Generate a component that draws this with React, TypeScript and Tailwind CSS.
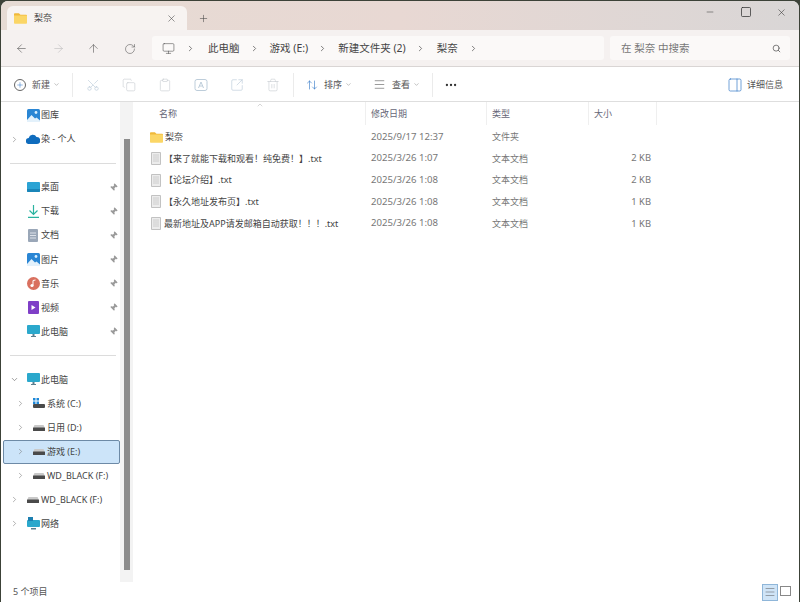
import { ArrowLeft, ArrowRight, ArrowUp, ArrowUpDown, ChevronDown, ChevronRight, ChevronUp, Clipboard, Copy, Ellipsis, Menu, Minus, Monitor, PanelRight, Pin, Plus, RotateCw, Scissors, Search, Square, SquareArrowOutUpRight, Trash2, X } from 'lucide-react';

const Folder = () => (
  <svg width="13" height="12" viewBox="0 0 16 14">
    <path d="M0 2a1 1 0 0 1 1-1h5l2 2h7a1 1 0 0 1 1 1v1H0z" fill="#f0b93a" />
    <path d="M0 4h16v9a1 1 0 0 1-1 1H1a1 1 0 0 1-1-1z" fill="#fbd666" />
  </svg>
);

const TextFile = () => (
  <svg width="10" height="13" viewBox="0 0 10 13">
    <path d="M.5.5h9v12h-9z" fill="#ececec" stroke="#c2c2c2" />
    <path d="M2 3h6M2 5h6M2 7h6M2 9h6" stroke="#c6c6c6" strokeWidth=".8" />
  </svg>
);

const Rename = () => (
  <svg width="14" height="14" viewBox="0 0 14 14" fill="none" stroke="#b5c7d6" strokeWidth=".9" className="ml-[22px]">
    <rect x="1" y="1.500" width="12" height="11" rx="2" />
    <path d="M4.500 10L7 4l2.500 6M5.400 8h3.200" />
  </svg>
);

const Picture = () => (
  <svg width="13" height="13" viewBox="0 0 13 13">
    <rect width="13" height="13" rx="1.5" fill="#2a86d4" />
    <circle cx="9" cy="3.5" r="1.4" fill="#d9efff" />
    <path d="M0 11l4.500-5 3.500 3.500 1.500-1L13 11.500V13H0z" fill="#e3f1fb" />
  </svg>
);

const Cloud = () => (
  <svg width="14" height="10" viewBox="0 0 14 10">
    <path d="M3 10a3 3 0 0 1-.3-6A4.200 4.200 0 0 1 10.500 3 3.500 3.500 0 0 1 11 10z" fill="#0f6cbd" />
  </svg>
);

const Desktop = () => (
  <svg width="13" height="10" viewBox="0 0 13 10">
    <rect width="13" height="10" rx="1" fill="#2ba3d4" />
    <path d="M0 7h13v2a1 1 0 0 1-1 1H1a1 1 0 0 1-1-1z" fill="#1a85b8" />
  </svg>
);

const Download = () => (
  <svg width="11" height="13" viewBox="0 0 11 13" fill="none" stroke="#2bb3a0" strokeWidth="1.200">
    <path d="M5.500 0v9M1.500 5.500l4 4 4-4M0 12.400h11" />
  </svg>
);

const Doc = () => (
  <svg width="10" height="13" viewBox="0 0 10 13">
    <rect width="10" height="13" rx="1" fill="#9aa7b8" />
    <path d="M2 4h6M2 6.500h6M2 9h6" stroke="#e4e9ef" strokeWidth=".9" />
  </svg>
);

const Music = () => (
  <svg width="13" height="13" viewBox="0 0 13 13">
    <circle cx="6.500" cy="6.500" r="6.500" fill="#d9705f" />
    <circle cx="5" cy="8.500" r="1.600" fill="#fff" />
    <path d="M6 8.500V3.500l2.500-.5" stroke="#fff" fill="none" />
  </svg>
);

const Video = () => (
  <svg width="11" height="13" viewBox="0 0 11 13">
    <rect width="11" height="13" rx="1" fill="#7f3fc7" />
    <path d="M3.500 4l4 2.500-4 2.500z" fill="#fff" />
  </svg>
);

const Pc = () => (
  <svg width="13" height="12" viewBox="0 0 13 12">
    <rect width="13" height="9" rx="1" fill="#2ba8cc" />
    <path d="M4 11h5v1H4zM5.500 9h2v2h-2z" fill="#5b7f8f" />
  </svg>
);

const Drive = () => (
  <svg width="12" height="6" viewBox="0 0 12 6">
    <path d="M1.500 0h9L12 3H0z" fill="#c9c9c9" />
    <rect y="2.500" width="12" height="3.500" rx=".6" fill="#4a4a4a" />
  </svg>
);

const SystemDrive = () => (
  <div className="relative w-[12px] h-[10px]">
    <svg width="6" height="6" viewBox="0 0 6 6" className="absolute left-0 top-0">
      <path d="M0 0h2.500v2.500H0zM3.500 0H6v2.500H3.500zM0 3.500h2.500V6H0zM3.500 3.500H6V6H3.500z" fill="#1e88d8" />
    </svg>
    <div className="absolute left-0 bottom-0 w-[12px] h-[4px] bg-[#4a4a4a] rounded-[1px]" />
  </div>
);

const Network = () => (
  <svg width="13" height="13" viewBox="0 0 13 13">
    <rect y="3" width="13" height="7" rx="1" fill="#2ba8cc" />
    <rect x="1" y="0" width="5" height="4" fill="#1d7fb0" />
    <path d="M4 11h5v1.500H4z" fill="#5b7f8f" />
  </svg>
);

function NavRow({ icon, label, level = 0, arrow, pin, selected }: { icon: React.ReactNode; label: string; level?: number; arrow?: 'right' | 'down'; pin?: boolean; selected?: boolean }) {
  const arrowCol = selected ? 'w-[28px] pl-[4px]' : level ? 'w-[30px] pl-[6px]' : 'w-[24px]';
  return (
    <div className={`flex items-center h-[24.050px] ${selected ? 'ml-[1px] bg-[#cce4f9] border border-[#6d8aa6] rounded-[2px]' : ''}`}>
      <div className={`flex justify-center shrink-0 ${arrowCol}`}>
        {arrow === 'right' && <ChevronRight size={9} strokeWidth={1.500} className="text-[#777]" />}
        {arrow === 'down' && <ChevronDown size={9} strokeWidth={1.500} className="text-[#555]" />}
      </div>
      <div className="flex justify-center items-center w-[14px] shrink-0">{icon}</div>
      <span className="ml-[1px] text-[9px] text-[#444] whitespace-nowrap">{label}</span>
      {pin && <Pin size={9} strokeWidth={0} fill="#9a9a9a" className="ml-auto mr-[2px] rotate-45" />}
    </div>
  );
}

function FileRow({ icon, name, date, type, size, folder }: { icon: React.ReactNode; name: string; date: string; type: string; size: string; folder?: boolean }) {
  return (
    <div className="grid grid-cols-[216px_121px_102px_68px] h-[21.700px] items-center text-[9px]">
      <div className="flex items-center">
        <div className={`flex items-center justify-center shrink-0 ${folder ? 'w-[13px]' : 'w-[11px]'}`}>{icon}</div>
        <span className={`${folder ? 'ml-[2px]' : 'ml-[3px]'} text-[#444] whitespace-nowrap`}>{name}</span>
      </div>
      <span className="pl-[5px] text-[#777] text-[9.600px]">{date}</span>
      <span className="pl-[5px] text-[#777]">{type}</span>
      <span className="pr-[6px] text-right text-[#777] text-[9.400px]">{size}</span>
    </div>
  );
}

export default function App() {
  return (
    <div className="w-[800px] h-[602px] bg-[#3c4238] overflow-hidden" style={{ fontFamily: '"Noto Sans", "Noto Sans CJK SC", sans-serif' }}>
      <div className="ml-[1px] mt-[1px] w-[798px] h-[601px] rounded-t-[7px] overflow-hidden flex flex-col bg-white">
        {/* title bar */}
        <div className="h-[29px] shrink-0 flex items-end pl-[6px] bg-gradient-to-r from-[#e6dbd4] via-[#e8d8d3] to-[#d9d6d6]">
          <div className="w-[180px] h-[24px] bg-[#f7f3f1] rounded-t-[6px] flex items-center pl-[7px] pr-[10px]">
            <Folder />
            <span className="ml-[7px] text-[9px] text-[#444]">梨奈</span>
            <X size={11} strokeWidth={1.200} className="ml-auto text-[#444]" />
          </div>
          <Plus size={11} strokeWidth={1.200} className="ml-[11px] mb-[6px] text-[#444]" />
          <div className="ml-auto self-start flex items-center mt-[5px] mr-[12px] text-[#333]">
            <Minus size={10} strokeWidth={1.200} className="mr-[24.500px]" />
            <Square size={12} strokeWidth={1.500} className="mr-[24.500px]" />
            <X size={11} strokeWidth={1.200} />
          </div>
        </div>
        {/* address row */}
        <div className="h-[37px] shrink-0 bg-[#f5f1f0] border-b border-[#d9d5d4] flex items-center">
          <div className="flex items-center w-[151px] mt-px text-[#555]">
            <ArrowLeft size={13} strokeWidth={1.100} className="ml-[14px]" />
            <ArrowRight size={13} strokeWidth={1.100} className="ml-[24px] text-[#bbb]" />
            <ArrowUp size={13} strokeWidth={1.100} className="ml-[22px]" />
            <RotateCw size={12} strokeWidth={1.100} className="ml-[24px]" />
          </div>
          <div className="w-[452px] h-[24px] pt-px bg-[#fbf9f8] rounded-[3px] flex items-center text-[10.500px] text-[#444]">
            <Monitor size={13} strokeWidth={1} className="ml-[10px] text-[#444]" />
            <ChevronRight size={9} className="ml-[11px] text-[#555]" />
            <span className="ml-[13px]">此电脑</span>
            <ChevronRight size={9} className="ml-[10px] text-[#555]" />
            <span className="ml-[11px]">游戏 (E:)</span>
            <ChevronRight size={9} className="ml-[10px] text-[#555]" />
            <span className="ml-[11px]">新建文件夹 (2)</span>
            <ChevronRight size={9} className="ml-[10px] text-[#555]" />
            <span className="ml-[12px]">梨奈</span>
            <ChevronRight size={9} className="ml-[11px] text-[#555]" />
          </div>
          <div className="ml-[6px] w-[180px] h-[24px] pt-px bg-[#fbf9f8] rounded-[3px] flex items-center pl-[11px] pr-[9px] text-[10.500px] text-[#777]">
            <span>在 梨奈 中搜索</span>
            <Search size={9} className="ml-auto text-[#555]" />
          </div>
        </div>
        {/* command bar */}
        <div className="h-[35px] shrink-0 pt-px bg-white border-b border-[#dedede] flex items-center text-[9px] text-[#555]">
          <div className="ml-[13px] w-[12px] h-[12px] rounded-full border border-[#666] flex items-center justify-center">
            <Plus size={8} strokeWidth={1.500} className="text-[#2a72c4]" />
          </div>
          <span className="ml-[6px]">新建</span>
          <ChevronDown size={7} className="ml-[3px] text-[#999]" />
          <div className="ml-[12px] w-px h-[24px] bg-[#ebebeb]" />
          <Scissors size={14} strokeWidth={1} className="ml-[13px] text-[#b5c7d6] -rotate-90" />
          <Copy size={14} strokeWidth={1} className="ml-[22px] text-[#c4c9ce]" />
          <Clipboard size={14} strokeWidth={1} className="ml-[22px] text-[#c4c9ce]" />
          <Rename />
          <SquareArrowOutUpRight size={14} strokeWidth={1} className="ml-[22px] text-[#b5c7d6]" />
          <Trash2 size={14} strokeWidth={1} className="ml-[22px] text-[#c4c9ce]" />
          <div className="ml-[13px] w-px h-[24px] bg-[#ebebeb]" />
          <ArrowUpDown size={12} strokeWidth={1.200} className="ml-[12px] text-[#2a72c4]" />
          <span className="ml-[6px]">排序</span>
          <ChevronDown size={7} className="ml-[3px] text-[#999]" />
          <Menu size={13} strokeWidth={1} className="ml-[21px] text-[#444]" />
          <span className="ml-[6px]">查看</span>
          <ChevronDown size={7} className="ml-[3px] text-[#999]" />
          <div className="ml-[12px] w-px h-[24px] bg-[#ebebeb]" />
          <Ellipsis size={14} strokeWidth={2} className="ml-[11px] text-[#333]" />
          <PanelRight size={16} strokeWidth={1} className="ml-auto text-[#2a72c4]" />
          <span className="ml-[4px] mr-[16px]">详细信息</span>
        </div>
        {/* body */}
        <div className="flex-1 min-h-0 flex">
          <div className="w-[119px] shrink-0 pl-[1px] pt-px">
            <NavRow icon={<Picture />} label="图库" />
            <NavRow icon={<Cloud />} label="染 - 个人" arrow="right" />
            <div className="h-[24px] flex items-center pl-[8px]"><div className="w-[106px] h-px bg-[#dcdcdc]" /></div>
            <NavRow icon={<Desktop />} label="桌面" pin />
            <NavRow icon={<Download />} label="下载" pin />
            <NavRow icon={<Doc />} label="文档" pin />
            <NavRow icon={<Picture />} label="图片" pin />
            <NavRow icon={<Music />} label="音乐" pin />
            <NavRow icon={<Video />} label="视频" pin />
            <NavRow icon={<Pc />} label="此电脑" pin />
            <div className="h-[24px] flex items-center pl-[8px]"><div className="w-[106px] h-px bg-[#dcdcdc]" /></div>
            <NavRow icon={<Pc />} label="此电脑" arrow="down" />
            <NavRow icon={<SystemDrive />} label="系统 (C:)" arrow="right" level={1} />
            <NavRow icon={<Drive />} label="日用 (D:)" arrow="right" level={1} />
            <NavRow icon={<Drive />} label="游戏 (E:)" arrow="right" level={1} selected />
            <NavRow icon={<Drive />} label="WD_BLACK (F:)" arrow="right" level={1} />
            <NavRow icon={<Drive />} label="WD_BLACK (F:)" arrow="right" />
            <NavRow icon={<Network />} label="网络" arrow="right" />
          </div>
          {/* nav scrollbar */}
          <div className="w-[13px] shrink-0 bg-[#f3f3f3] flex justify-center pt-[37px] pb-[12px]">
            <div className="w-[6px] h-full bg-[#8c8c8c]" />
          </div>
          {/* file list */}
          <div className="flex-1 pl-[17px]">
            <div className="relative grid grid-cols-[216px_121px_102px_68px] h-[24px] pb-px text-[9px] text-[#667]">
              <ChevronUp size={8} strokeWidth={1.200} className="absolute left-[106px] -top-[1px] text-[#999]" />
              <div className="flex items-center pl-[9px] border-r border-[#efefef]">名称</div>
              <div className="flex items-center pl-[5px] border-r border-[#efefef]">修改日期</div>
              <div className="flex items-center pl-[5px] border-r border-[#efefef]">类型</div>
              <div className="flex items-center pl-[5px] border-r border-[#efefef]">大小</div>
            </div>
            <FileRow icon={<Folder />} name="梨奈" date="2025/9/17 12:37" type="文件夹" size="" folder />
            <FileRow icon={<TextFile />} name="【来了就能下载和观看！纯免费！】.txt" date="2025/3/26 1:07" type="文本文档" size="2 KB" />
            <FileRow icon={<TextFile />} name="【论坛介绍】.txt" date="2025/3/26 1:08" type="文本文档" size="2 KB" />
            <FileRow icon={<TextFile />} name="【永久地址发布页】.txt" date="2025/3/26 1:08" type="文本文档" size="1 KB" />
            <FileRow icon={<TextFile />} name="最新地址及APP请发邮箱自动获取！！！.txt" date="2025/3/26 1:08" type="文本文档" size="1 KB" />
          </div>
        </div>
        {/* status bar */}
        <div className="h-[20px] shrink-0 flex items-center bg-white text-[9px] text-[#555]">
          <span className="ml-[12px]">5 个项目</span>
          <div className="ml-auto w-[16px] h-[17px] bg-[#cfe4f7] border border-[#8fb6d9] flex items-center justify-center">
            <Menu size={12} strokeWidth={1} className="text-[#555]" />
          </div>
          <div className="ml-[2px] mr-[8px] w-[11px] h-[10px] border border-[#888] mb-[3px]" />
        </div>
      </div>
    </div>
  );
}
